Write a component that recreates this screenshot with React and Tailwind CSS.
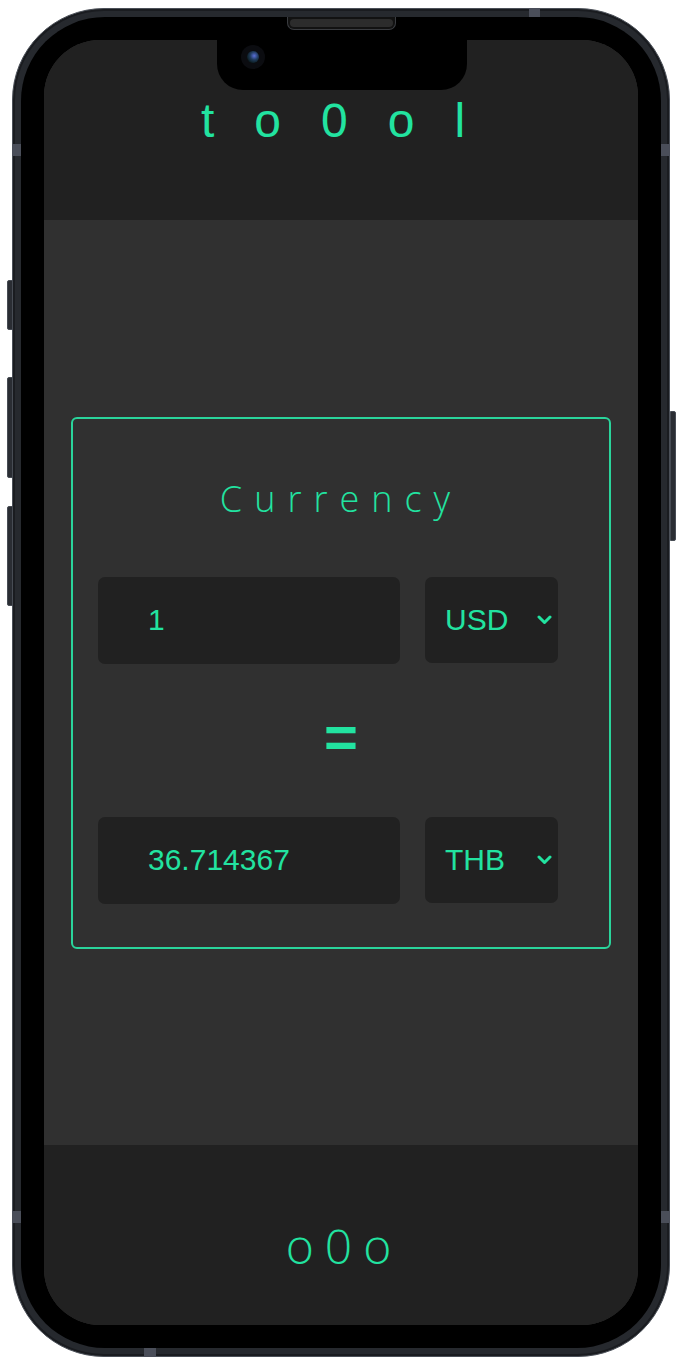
import React from "react";

function Chevron() {
  return (
    <svg width="15" height="10" viewBox="0 0 15 10" className="shrink-0">
      <polyline points="2,2 7.5,7.5 13,2" fill="none" stroke="#22e3a0" strokeWidth="3" strokeLinecap="round" strokeLinejoin="round" />
    </svg>
  );
}

function Row({ value, cur }) {
  return (
    <div className="flex items-start gap-[25px] pl-[25px]">
      <div className="w-[302px] h-[87px] bg-[#212121] rounded-[7px] flex items-center pl-[50px] text-[30px] text-[#22e3a0] leading-none" style={{ fontFamily: '"Liberation Sans", Arial, sans-serif' }}>
        {value}
      </div>
      <div className="w-[133px] h-[86px] bg-[#212121] rounded-[7px] flex items-center justify-between pl-[20px] pr-[6px] text-[30px] text-[#22e3a0] leading-none" style={{ fontFamily: '"Liberation Sans", Arial, sans-serif' }}>
        <span>{cur}</span>
        <Chevron />
      </div>
    </div>
  );
}

export default function App() {
  return (
    <div className="w-[676px] h-[1358px] bg-white pt-[8px] pl-[12px] overflow-hidden">
      <div className="relative w-[658px] h-[1349px] rounded-[92px] bg-[#26292e] border border-[#4b5058] p-[8px] shadow-[inset_0_0_0_2px_#1a1c20]">
        {/* antenna bands */}
        <div className="absolute left-[516px] top-[-1px] w-[11px] h-[9px] bg-[#4a4e59]" />
        <div className="absolute left-[131px] bottom-[-1px] w-[12px] h-[9px] bg-[#4a4e59]" />
        <div className="absolute left-[-1px] top-[135px] w-[9px] h-[12px] bg-[#4a4e59]" />
        <div className="absolute left-[-1px] top-[1202px] w-[9px] h-[12px] bg-[#4a4e59]" />
        <div className="absolute right-[-1px] top-[135px] w-[9px] h-[12px] bg-[#4a4e59]" />
        <div className="absolute right-[-1px] top-[1202px] w-[9px] h-[12px] bg-[#4a4e59]" />
        {/* side buttons */}
        <div className="absolute left-[-6px] top-[271px] w-[6px] h-[50px] rounded-l-[2px] bg-[#2a2d33] border border-[#474c54]" />
        <div className="absolute left-[-6px] top-[368px] w-[6px] h-[101px] rounded-l-[2px] bg-[#2a2d33] border border-[#474c54]" />
        <div className="absolute left-[-6px] top-[497px] w-[6px] h-[100px] rounded-l-[2px] bg-[#2a2d33] border border-[#474c54]" />
        <div className="absolute right-[-7px] top-[402px] w-[6px] h-[130px] rounded-r-[2px] bg-[#2a2d33] border border-[#474c54]" />

        {/* bezel */}
        <div className="relative w-full h-full rounded-[84px] bg-black p-[23px]">
          {/* speaker */}
          <div className="absolute left-[266px] top-0 w-[109px] h-[13px] rounded-b-[7px] bg-[#121212] border border-[#3a3c40] border-t-0 p-[2px]">
            <div className="w-full h-full rounded-full bg-[#2c2c2c]" />
          </div>
          {/* screen */}
          <div className="relative w-full h-full rounded-[56px] overflow-hidden bg-[#303030] flex flex-col">
            {/* notch */}
            <div className="absolute left-[173px] top-0 w-[250px] h-[50px] bg-black rounded-b-[26px]">
              <div className="absolute left-[24px] top-[5px] w-[24px] h-[24px] rounded-full bg-[#0b0c10] flex items-center justify-center">
                <div className="w-[12px] h-[12px] rounded-full bg-[radial-gradient(circle_at_60%_40%,#5a6fd8_0%,#1f3a5a_40%,#0a1a1c_75%)]" />
              </div>
            </div>

            <header className="h-[180px] shrink-0 bg-[#212121] pt-[57px] pl-[24px] text-center">
              <div className="text-[48px] leading-[48px] tracking-[40px] text-[#22e3a0]" style={{ fontFamily: '"Liberation Sans", Arial, sans-serif' }}>
                to0ol
              </div>
            </header>

            <main className="flex-1 flex items-center justify-center">
              <div className="w-[540px] border-2 border-[#2ad49b] rounded-[6px] pt-[62px] pb-[43px] flex flex-col">
                <div className="text-center text-[36px] leading-[36px] font-light tracking-[12px] text-[#22e3a0]" style={{ fontFamily: '"Open Sans", sans-serif' }}>
                  Currency
                </div>
                <div className="h-[60px]" />
                <Row value="1" cur="USD" />
                <div className="h-[153px] flex items-center justify-center pb-[6px]">
                  <span className="text-[58px] leading-none font-bold text-[#22e3a0]" style={{ fontFamily: '"Liberation Sans", Arial, sans-serif' }}>=</span>
                </div>
                <Row value="36.714367" cur="THB" />
              </div>
            </main>

            <footer className="h-[180px] shrink-0 bg-[#212121] pt-[77px] text-center">
              <div className="text-[48px] leading-[48px] font-light tracking-[11px] pl-[6px] text-[#22e3a0]" style={{ fontFamily: '"Open Sans", sans-serif' }}>
                o0o
              </div>
            </footer>
          </div>
        </div>
      </div>
    </div>
  );
}
